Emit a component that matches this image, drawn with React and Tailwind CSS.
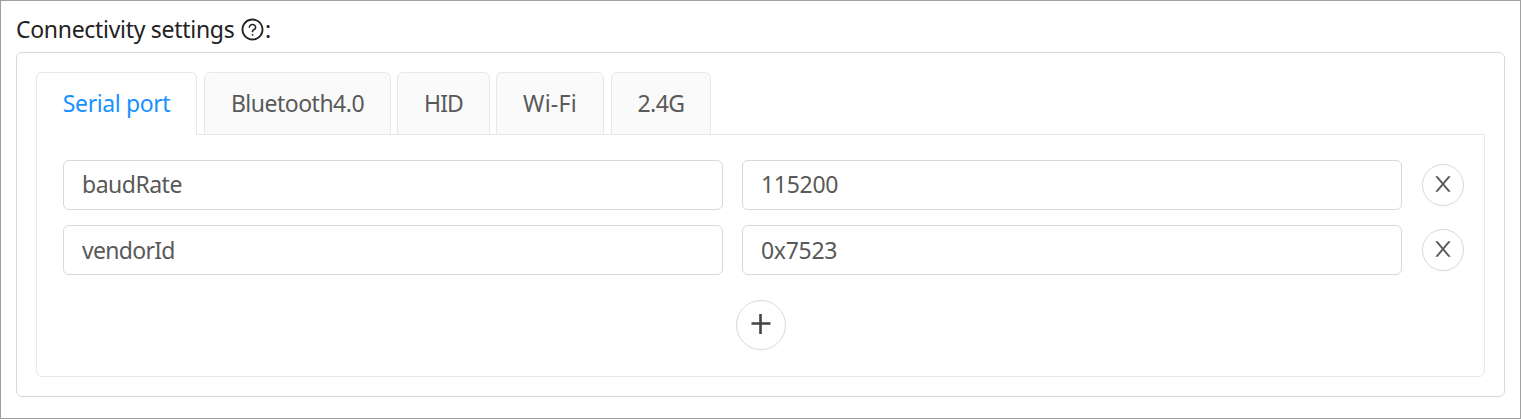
import { AiOutlineQuestionCircle } from "react-icons/ai";

const tabs = [
  { label: "Serial port", width: "w-[161px]", gap: "mr-[7px]", track: "tracking-[-0.4px]", active: true },
  { label: "Bluetooth4.0", width: "w-[187px]", gap: "mr-[6px]", track: "tracking-[-0.5px]" },
  { label: "HID", width: "w-[93px]", gap: "mr-[6px]", track: "tracking-[-0.9px]" },
  { label: "Wi-Fi", width: "w-[108px]", gap: "mr-[7px]", track: "tracking-[0.3px]" },
  { label: "2.4G", width: "w-[100px]", gap: "", track: "tracking-[-0.5px]" },
];

const rows = [
  { name: "baudRate", nameTrack: "tracking-[-0.5px]", value: "115200", lift: "pb-[2px]" },
  { name: "vendorId", nameTrack: "tracking-[-0.7px]", value: "0x7523", lift: "pb-0" },
];

function CloseIcon() {
  return (
    <svg viewBox="0 0 1024 1024" className="size-6 shrink-0 -translate-y-px" fill="currentColor">
      <path d="M563.8 512l262.5-312.9c4.4-5.2.7-13.1-6.1-13.1h-79.8c-4.7 0-9.2 2.1-12.3 5.7L511.6 449.8 295.1 191.7c-3-3.6-7.5-5.7-12.3-5.7H203c-6.8 0-10.5 7.9-6.1 13.1L459.4 512 196.9 824.9A7.95 7.95 0 00203 838h79.8c4.7 0 9.2-2.1 12.3-5.7l216.5-258.1 216.5 258.1c3 3.6 7.5 5.7 12.3 5.7h79.8c6.8 0 10.5-7.9 6.1-13.1L563.8 512z" />
    </svg>
  );
}

function Field({ track, lift, children }) {
  return (
    <div className={`flex h-[50px] w-[660px] shrink-0 items-center rounded-md border border-[#d9d9d9] pl-[18px] ${lift} ${track}`}>
      <span>{children}</span>
    </div>
  );
}

export default function App() {
  return (
    <div className="h-[419px] w-[1521px] border border-[#a0a0a0] bg-white px-[15px] font-['Noto_Sans',sans-serif] text-[23px] leading-8 text-[#595959]">
      <div className="flex h-[51px] items-center pt-[5px] text-[#222222]">
        <span className="w-[224px] whitespace-nowrap tracking-[-0.3px]">Connectivity settings</span>
        <AiOutlineQuestionCircle className="size-[25px] shrink-0" />
        <span>:</span>
      </div>
      <div className="h-[345px] w-[1489px] rounded-md border border-[#d9d9d9] px-[19px] pt-[19px]">
        <div className="flex h-[63px]">
          {tabs.map((t) => (
            <div
              key={t.label}
              className={`flex items-center justify-center rounded-t-md border border-[#e8e8e8] pb-[2px] whitespace-nowrap ${t.width} ${t.gap} ${t.track} ${
                t.active ? "z-10 border-b-white bg-white text-[#1890ff]" : "bg-[#fafafa]"
              }`}
            >
              {t.label}
            </div>
          ))}
        </div>
        <div className="-mt-px h-[243px] rounded-b-md border border-[#e8e8e8] pt-[25px] pl-[26px]">
          <div className="flex flex-col gap-[15px]">
            {rows.map((r) => (
              <div key={r.name} className="flex items-center">
                <Field track={r.nameTrack} lift={r.lift}>{r.name}</Field>
                <div className="w-[19px] shrink-0" />
                <Field track="tracking-[-0.3px]" lift={r.lift}>{r.value}</Field>
                <button className="ml-5 flex size-[42px] shrink-0 items-center justify-center rounded-full border border-[#d9d9d9] shadow-[0_2px_0_rgba(0,0,0,0.016)]">
                  <CloseIcon />
                </button>
              </div>
            ))}
          </div>
          <button className="mt-[25px] ml-[673px] flex size-[50px] items-center justify-center rounded-full border border-[#d9d9d9] text-[#444444] shadow-[0_2px_0_rgba(0,0,0,0.016)]">
            <svg viewBox="0 0 20 20" className="size-5 -translate-y-px" stroke="currentColor" strokeWidth="2.6">
              <path d="M0.5 9.5H19.5M9.5 0V20" />
            </svg>
          </button>
        </div>
      </div>
    </div>
  );
}
